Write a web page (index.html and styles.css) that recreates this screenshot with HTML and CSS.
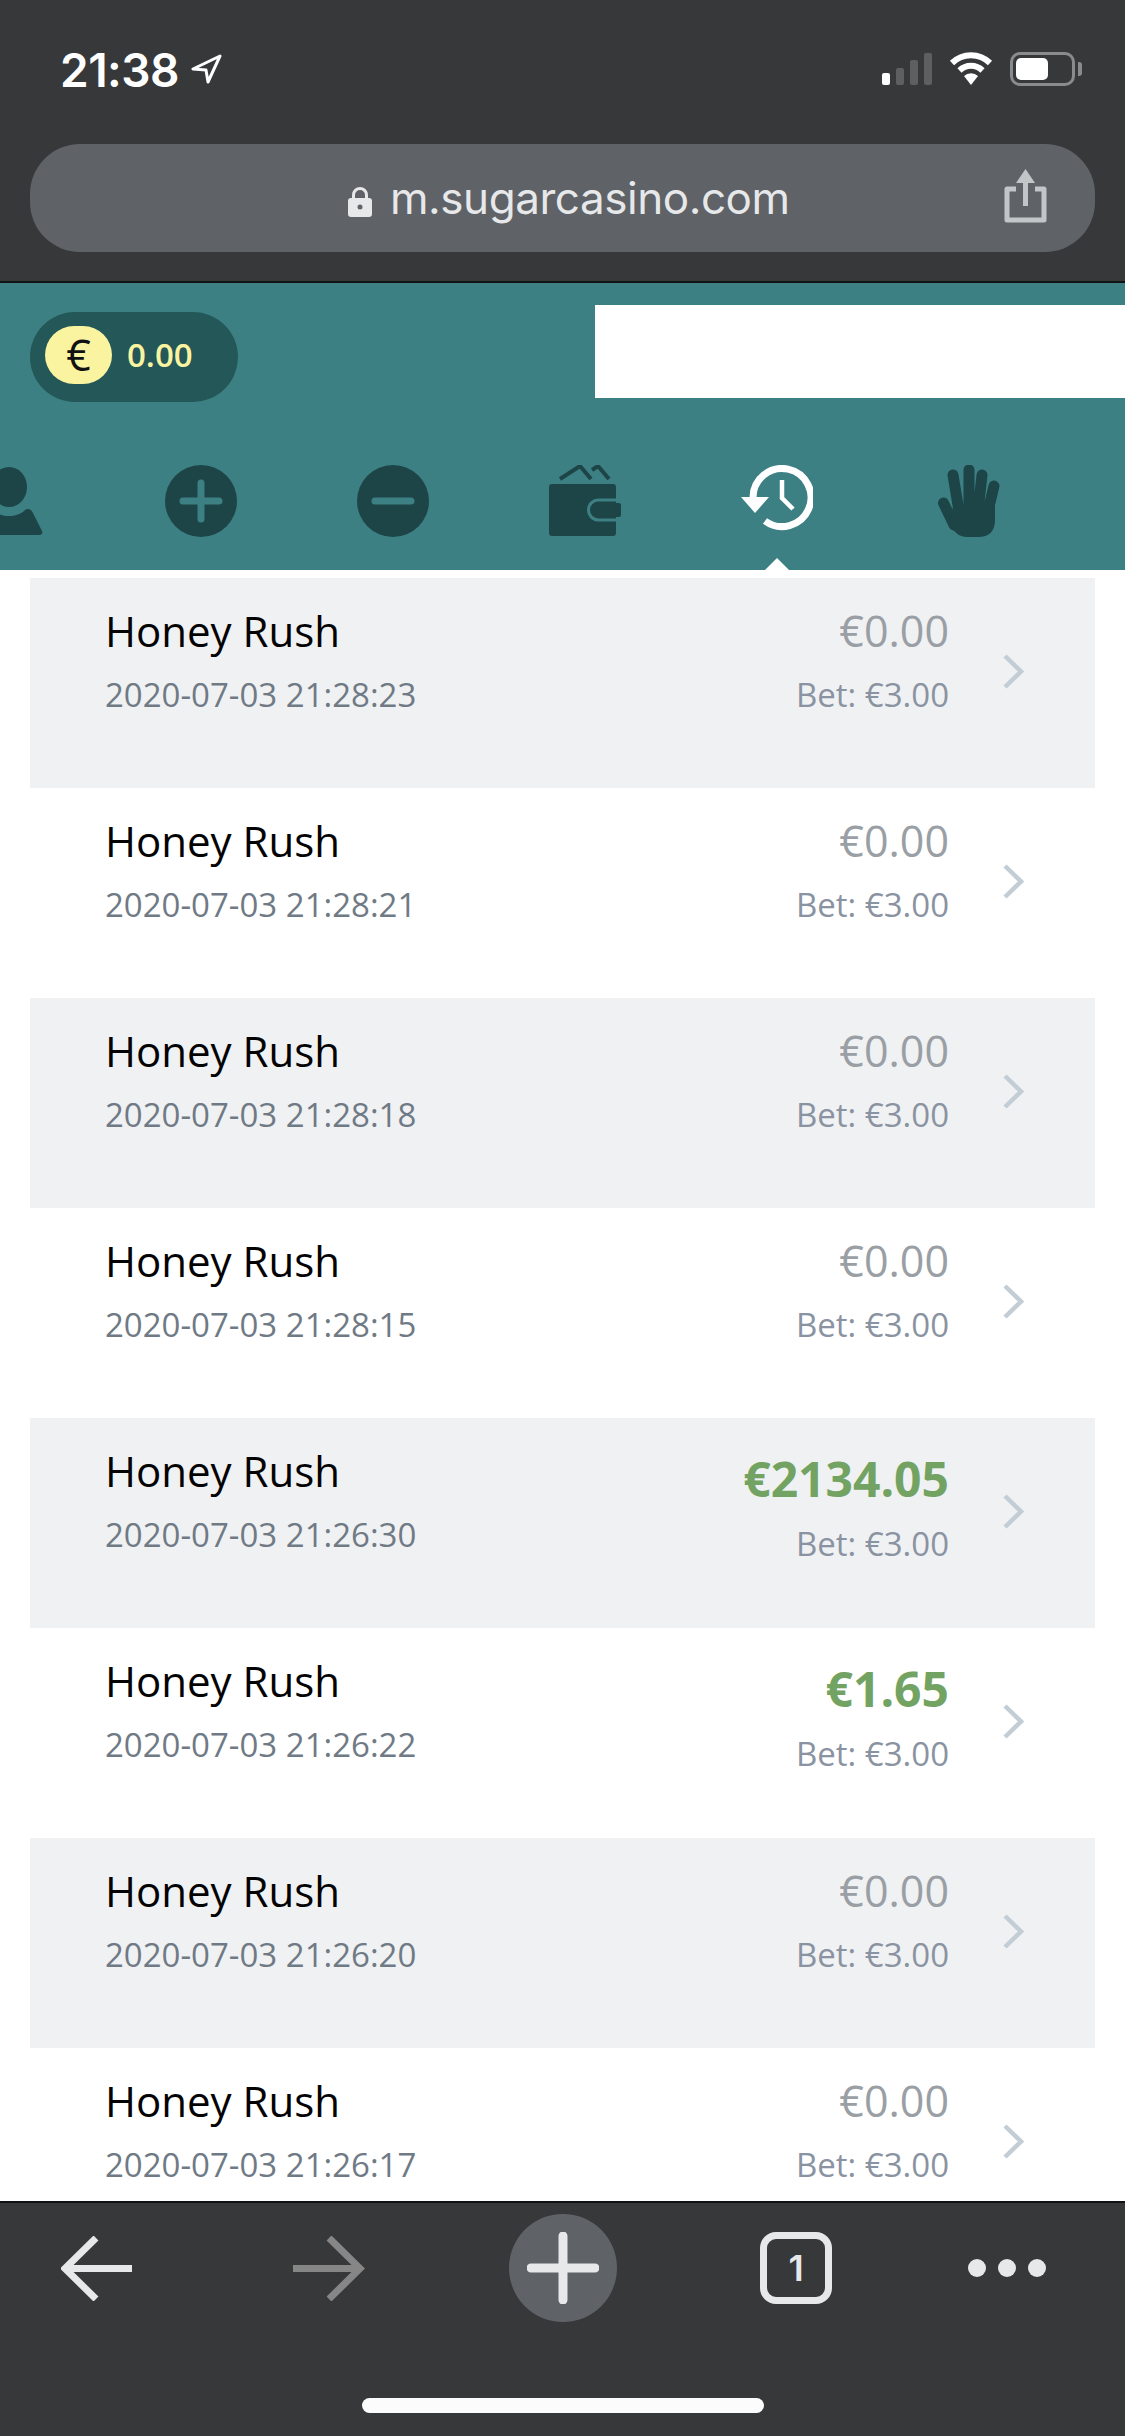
FILE: index.html
```html
<!DOCTYPE html>
<html lang="en">
<head>
    <meta charset="UTF-8">
    <meta name="viewport" content="width=device-width, initial-scale=1.0">
    <title>Sugar Casino - History</title>
    <link rel="stylesheet" href="styles.css">
</head>
<body>
    <div class="browser-top">
        <div class="status-bar">
            <span class="clock">21:38</span>
            <svg class="location" width="31" height="30" viewBox="0 0 31 30"><path d="M29 2 L2 15 L15 16 L17 28 Z" fill="none" stroke="#fff" stroke-width="3" stroke-linejoin="round"/></svg>
            <div class="signal">
                <span class="bar bar-on bar-1"></span>
                <span class="bar bar-2"></span>
                <span class="bar bar-3"></span>
                <span class="bar bar-4"></span>
            </div>
            <svg class="wifi" width="46" height="33" viewBox="0 0 46 33">
                <path d="M4 11 A27 27 0 0 1 42 11" fill="none" stroke="#fff" stroke-width="6"/>
                <path d="M11.500 18.500 A16.500 16.500 0 0 1 34.500 18.500" fill="none" stroke="#fff" stroke-width="6"/>
                <path d="M16 24 A10 10 0 0 1 30 24 L23 33 Z" fill="#fff"/>
            </svg>
            <div class="battery"><span class="battery-fill"></span></div>
            <span class="battery-nub"></span>
        </div>
        <div class="url-bar">
            <svg class="lock" width="24" height="31" viewBox="0 0 24 31">
                <path d="M5.500 13 V9 a6.500 6.500 0 0 1 13 0 V13" fill="none" stroke="#e6e8ea" stroke-width="3"/>
                <rect x="0" y="12" width="24" height="19" rx="3" fill="#e6e8ea"/>
                <circle cx="12" cy="21" r="2.500" fill="#5f6266"/>
            </svg>
            <span class="url-text">m.sugarcasino.com</span>
            <svg class="share" width="43" height="54" viewBox="0 0 43 54">
                <path d="M12 20 H3 V51 H40 V20 H31" fill="none" stroke="#c3c6c9" stroke-width="5" stroke-linejoin="round"/>
                <path d="M21.500 10 V37" stroke="#c3c6c9" stroke-width="5"/>
                <path d="M21.500 0 L31 14 H12 Z" fill="#c3c6c9"/>
            </svg>
        </div>
    </div>

    <div class="site-header">
        <div class="header-top">
            <div class="balance">
                <span class="currency">€</span>
                <span class="balance-value">0.00</span>
            </div>
            <div class="blank-box"></div>
        </div>
        <div class="icon-nav">
            <div class="nav-item">
                <svg width="72" height="72" viewBox="0 0 72 72">
                    <ellipse cx="36" cy="22" rx="18" ry="20" fill="#1d4548"/>
                    <path d="M6 70 c-3 0 -4 -2 -3 -4 l9 -18 c2 -4 5 -5 8 -3 c4 4 10 6 16 6 s12 -2 16 -6 c3 -2 6 -1 8 3 l9 18 c1 2 0 4 -3 4 z" fill="#1d4548"/>
                </svg>
            </div>
            <div class="nav-item">
                <svg width="72" height="72" viewBox="0 0 72 72">
                    <circle cx="36" cy="36" r="36" fill="#1d4548"/>
                    <path d="M18 36 H54 M36 18 V54" stroke="#3c8084" stroke-width="7" stroke-linecap="round"/>
                </svg>
            </div>
            <div class="nav-item">
                <svg width="72" height="72" viewBox="0 0 72 72">
                    <circle cx="36" cy="36" r="36" fill="#1d4548"/>
                    <path d="M18 36 H54" stroke="#3c8084" stroke-width="7" stroke-linecap="round"/>
                </svg>
            </div>
            <div class="nav-item">
                <svg width="72" height="72" viewBox="0 0 72 72">
                    <path d="M11 14 L31 1 L42 14 M43 5 L49 1 L60 14" fill="none" stroke="#1d4548" stroke-width="4"/>
                    <rect x="0" y="19" width="67" height="52" rx="3" fill="#1d4548"/>
                    <rect x="39.500" y="35" width="40" height="20" rx="10" fill="#1d4548" stroke="#3c8084" stroke-width="3"/>
                    <rect x="67" y="34" width="6" height="22" fill="#3c8084"/>
                    <rect x="60" y="38" width="12" height="14" rx="2" fill="#1d4548"/>
                </svg>
            </div>
            <div class="nav-item nav-active">
                <svg width="72" height="72" viewBox="0 0 72 72">
                    <path d="M12 32.500 A29 29 0 1 1 24 56" fill="none" stroke="#fff" stroke-width="7"/>
                    <path d="M0 32 H28 L14 48 Z" fill="#fff"/>
                    <path d="M41 15 V33 L52 44" fill="none" stroke="#fff" stroke-width="4.500"/>
                </svg>
            </div>
            <div class="nav-item">
                <svg width="62" height="72" viewBox="0 0 62 72">
                    <path d="M15 10 L21 46 M31 5 V46 M44 10 L40 46 M56 21 L49 50 M5.500 38 L16 60" stroke="#1d4548" stroke-width="11" stroke-linecap="round"/>
                    <path d="M15 42 L57 40 V55 Q57 72 40 72 H29 Q17 72 11 57 Z" fill="#1d4548"/>
                </svg>
            </div>
        </div>
    </div>

    <div class="history-list">
        <div class="row row-shaded">
            <div class="row-info"><div class="game">Honey Rush</div><div class="date">2020-07-03 21:28:23</div></div>
            <div class="row-amounts"><div class="win">€0.00</div><div class="bet">Bet: €3.00</div></div>
            <svg class="chevron" width="21" height="35" viewBox="0 0 21 35"><path d="M2 2 L18 17.500 L2 33" fill="none" stroke="#c3cdd6" stroke-width="4.500"/></svg>
        </div>
        <div class="row">
            <div class="row-info"><div class="game">Honey Rush</div><div class="date">2020-07-03 21:28:21</div></div>
            <div class="row-amounts"><div class="win">€0.00</div><div class="bet">Bet: €3.00</div></div>
            <svg class="chevron" width="21" height="35" viewBox="0 0 21 35"><path d="M2 2 L18 17.500 L2 33" fill="none" stroke="#c3cdd6" stroke-width="4.500"/></svg>
        </div>
        <div class="row row-shaded">
            <div class="row-info"><div class="game">Honey Rush</div><div class="date">2020-07-03 21:28:18</div></div>
            <div class="row-amounts"><div class="win">€0.00</div><div class="bet">Bet: €3.00</div></div>
            <svg class="chevron" width="21" height="35" viewBox="0 0 21 35"><path d="M2 2 L18 17.500 L2 33" fill="none" stroke="#c3cdd6" stroke-width="4.500"/></svg>
        </div>
        <div class="row">
            <div class="row-info"><div class="game">Honey Rush</div><div class="date">2020-07-03 21:28:15</div></div>
            <div class="row-amounts"><div class="win">€0.00</div><div class="bet">Bet: €3.00</div></div>
            <svg class="chevron" width="21" height="35" viewBox="0 0 21 35"><path d="M2 2 L18 17.500 L2 33" fill="none" stroke="#c3cdd6" stroke-width="4.500"/></svg>
        </div>
        <div class="row row-shaded">
            <div class="row-info"><div class="game">Honey Rush</div><div class="date">2020-07-03 21:26:30</div></div>
            <div class="row-amounts"><div class="win win-big">€2134.05</div><div class="bet">Bet: €3.00</div></div>
            <svg class="chevron" width="21" height="35" viewBox="0 0 21 35"><path d="M2 2 L18 17.500 L2 33" fill="none" stroke="#c3cdd6" stroke-width="4.500"/></svg>
        </div>
        <div class="row">
            <div class="row-info"><div class="game">Honey Rush</div><div class="date">2020-07-03 21:26:22</div></div>
            <div class="row-amounts"><div class="win win-big">€1.65</div><div class="bet">Bet: €3.00</div></div>
            <svg class="chevron" width="21" height="35" viewBox="0 0 21 35"><path d="M2 2 L18 17.500 L2 33" fill="none" stroke="#c3cdd6" stroke-width="4.500"/></svg>
        </div>
        <div class="row row-shaded">
            <div class="row-info"><div class="game">Honey Rush</div><div class="date">2020-07-03 21:26:20</div></div>
            <div class="row-amounts"><div class="win">€0.00</div><div class="bet">Bet: €3.00</div></div>
            <svg class="chevron" width="21" height="35" viewBox="0 0 21 35"><path d="M2 2 L18 17.500 L2 33" fill="none" stroke="#c3cdd6" stroke-width="4.500"/></svg>
        </div>
        <div class="row">
            <div class="row-info"><div class="game">Honey Rush</div><div class="date">2020-07-03 21:26:17</div></div>
            <div class="row-amounts"><div class="win">€0.00</div><div class="bet">Bet: €3.00</div></div>
            <svg class="chevron" width="21" height="35" viewBox="0 0 21 35"><path d="M2 2 L18 17.500 L2 33" fill="none" stroke="#c3cdd6" stroke-width="4.500"/></svg>
        </div>
    </div>

    <div class="browser-bottom">
        <div class="toolbar">
            <svg class="tool-back" width="71" height="65" viewBox="0 0 71 65"><path d="M71 32.500 H5 M35 2 L4 32.500 L35 63" fill="none" stroke="#e6e8ea" stroke-width="7"/></svg>
            <svg class="tool-forward" width="72" height="65" viewBox="0 0 72 65"><path d="M0 32.500 H66 M36 2 L67 32.500 L36 63" fill="none" stroke="#868686" stroke-width="7"/></svg>
            <div class="tool-new">
                <svg width="72" height="72" viewBox="0 0 72 72"><path d="M4 36 H68 M36 4 V68" stroke="#e6e8ea" stroke-width="9" stroke-linecap="round"/></svg>
            </div>
            <div class="tool-tabs">1</div>
            <div class="tool-more"><span class="dot"></span><span class="dot"></span><span class="dot"></span></div>
        </div>
        <div class="home-indicator"></div>
    </div>
</body>
</html>
```

FILE: styles.css
```css
html, body {
    margin: 0;
    padding: 0;
}
body {
    width: 1125px;
    height: 2436px;
    overflow: hidden;
    display: flex;
    flex-direction: column;
    background-color: #ffffff;
    font-family: "Open Sans", Arial, sans-serif;
}

/* browser chrome, top */
.browser-top {
    height: 281px;
    background-color: #37383a;
    border-bottom: 2px solid #111213;
    flex-shrink: 0;
}
.status-bar {
    display: flex;
    align-items: flex-start;
    height: 144px;
    padding: 52px 43px 0 60px;
    box-sizing: border-box;
}
.clock {
    font-family: Inter, sans-serif;
    font-weight: 600;
    font-size: 46px;
    line-height: 36px;
    color: #ffffff;
    letter-spacing: -0.5px;
}
.location {
    margin-left: 12px;
    margin-top: 2px;
}
.signal {
    display: flex;
    align-items: flex-end;
    gap: 6px;
    height: 33px;
    margin-left: auto;
}
.bar {
    width: 8px;
    border-radius: 2px;
    background-color: #5e5f60;
}
.bar-on {
    background-color: #ffffff;
}
.bar-1 { height: 12px; }
.bar-2 { height: 17px; }
.bar-3 { height: 25px; }
.bar-4 { height: 32px; }
.wifi {
    margin-left: 16px;
}
.battery {
    width: 65px;
    height: 34px;
    box-sizing: border-box;
    margin-left: 16px;
    padding: 3px;
    border: 3px solid #8a8b8c;
    border-radius: 10px;
}
.battery-fill {
    display: block;
    width: 32px;
    height: 22px;
    border-radius: 5px;
    background-color: #ffffff;
}
.battery-nub {
    width: 4px;
    height: 14px;
    margin: 10px 0 0 3px;
    border-radius: 0 3px 3px 0;
    background-color: #8a8b8c;
}
.url-bar {
    display: flex;
    align-items: center;
    height: 108px;
    margin: 0 30px;
    padding: 0 48px 0 318px;
    border-radius: 50px;
    background-color: #5f6266;
}
.lock {
    margin-top: 6px;
}
.url-text {
    margin-left: 18px;
    font-family: Inter, sans-serif;
    font-size: 44px;
    letter-spacing: -0.45px;
    color: #e6e8ea;
}
.share {
    margin-left: auto;
    margin-top: -4px;
}

/* site header */
.site-header {
    height: 287px;
    flex-shrink: 0;
    background-color: #3c8084;
    overflow: hidden;
}
.header-top {
    display: flex;
    justify-content: space-between;
    align-items: flex-start;
    height: 182px;
    padding-left: 30px;
}
.balance {
    display: flex;
    align-items: center;
    width: 208px;
    height: 90px;
    margin-top: 29px;
    padding-left: 15px;
    box-sizing: border-box;
    border-radius: 45px;
    background-color: #235758;
}
.currency {
    display: flex;
    justify-content: center;
    align-items: center;
    width: 67px;
    height: 58px;
    margin-top: -5px;
    border-radius: 29px;
    background-color: #faf3a0;
    color: #111111;
    font-size: 43px;
}
.balance-value {
    margin-left: 15px;
    margin-top: -5px;
    font-size: 33px;
    font-weight: 600;
    color: #faf3a0;
}
.blank-box {
    width: 530px;
    height: 93px;
    margin-top: 22px;
    background-color: #ffffff;
}
.icon-nav {
    display: flex;
    margin-left: -87px;
}
.nav-item {
    position: relative;
    display: flex;
    justify-content: center;
    width: 192px;
    height: 105px;
    flex-shrink: 0;
}
.nav-active::after {
    content: "";
    position: absolute;
    left: 84px;
    bottom: 0;
    border-left: 12px solid transparent;
    border-right: 12px solid transparent;
    border-bottom: 12px solid #ffffff;
}

/* history rows */
.history-list {
    flex: 1;
    min-height: 0;
    overflow: hidden;
    padding: 8px 30px 0;
}
.row {
    display: flex;
    height: 210px;
    box-sizing: border-box;
    padding: 24px 71px 0 75px;
}
.row-shaded {
    background-color: #f0f1f3;
}
.row-amounts {
    margin-left: auto;
    text-align: right;
}
.game {
    font-size: 42px;
    line-height: 58px;
    color: #030303;
}
.date, .bet {
    margin-top: 13px;
    font-size: 33px;
    line-height: 44px;
}
.date {
    color: #6f7a85;
}
.bet {
    color: #8a93a1;
}
.win {
    font-size: 43px;
    line-height: 58px;
    color: #9a9fa5;
}
.win-big {
    height: 64px;
    margin-top: 5px;
    margin-bottom: -2px;
    line-height: 64px;
    font-size: 48px;
    font-weight: 700;
    color: #73a363;
}
.chevron {
    margin: 52px 0 0 54px;
    flex-shrink: 0;
}

/* browser chrome, bottom */
.browser-bottom {
    height: 235px;
    box-sizing: border-box;
    flex-shrink: 0;
    border-top: 2px solid #111213;
    background-color: #37383a;
}
.toolbar {
    display: flex;
    align-items: center;
    height: 108px;
    margin-top: 11px;
    padding-left: 61px;
}
.tool-forward {
    margin-left: 161px;
}
.tool-new {
    display: flex;
    justify-content: center;
    align-items: center;
    width: 108px;
    height: 108px;
    margin-left: 144px;
    border-radius: 50%;
    background-color: #5f6266;
}
.tool-tabs {
    display: flex;
    justify-content: center;
    align-items: center;
    width: 72px;
    height: 72px;
    box-sizing: border-box;
    margin-left: 143px;
    border: 7px solid #e6e8ea;
    border-radius: 16px;
    color: #e6e8ea;
    font-family: Inter, sans-serif;
    font-size: 36px;
    font-weight: 600;
}
.tool-more {
    display: flex;
    gap: 12px;
    margin-left: 136px;
}
.dot {
    width: 18px;
    height: 18px;
    border-radius: 50%;
    background-color: #e6e8ea;
}
.home-indicator {
    width: 402px;
    height: 15px;
    margin: 76px auto 0;
    border-radius: 8px;
    background-color: #fcfcfc;
}
```
